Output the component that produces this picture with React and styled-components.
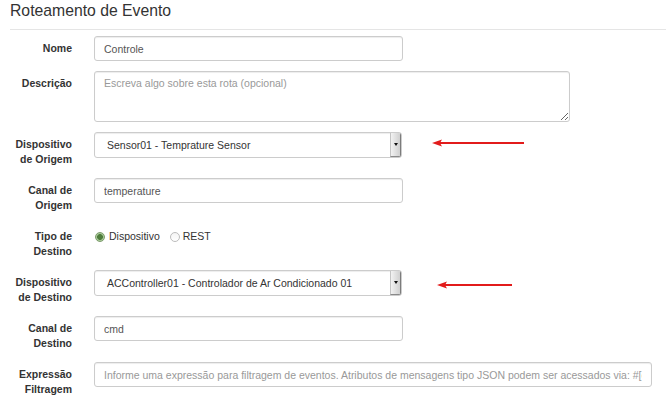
import React from 'react';
import styled, { createGlobalStyle } from 'styled-components';

const GlobalStyle = createGlobalStyle`
  html, body {
    margin: 0;
    padding: 0;
    background: #fff;
  }
  body {
    font-family: "Liberation Sans", Arial, Helvetica, sans-serif;
    font-size: 10.5px;
    line-height: 15px;
    color: #333;
  }
`;

const Page = styled.div`
  padding-left: 10px;
`;

const Legend = styled.h2`
  margin: 0 0 6px;
  padding: 1px 0 8px;
  font-size: 15.75px;
  font-weight: normal;
  line-height: 20px;
  color: #333;
  border-bottom: 1px solid #e5e5e5;
`;

const Form = styled.form`
  display: flex;
  flex-direction: column;
  gap: 10px;
  margin: 0;
`;

const Row = styled.div`
  display: grid;
  grid-template-columns: 62px 1fr;
  column-gap: 22px;
  align-items: start;
`;

const Label = styled.label`
  text-align: right;
  font-weight: bold;
  padding: 5px 0 1px;
  color: #333;
`;

const Control = styled.div`
  display: flex;
  align-items: flex-start;
`;

const TextInput = styled.input`
  box-sizing: border-box;
  width: ${p => p.$w}px;
  height: 25px;
  margin: 0;
  padding: 4px 9px;
  font: inherit;
  color: #555;
  background: #fff;
  border: 1px solid #ccc;
  border-radius: 3px;
  box-shadow: inset 0 1px 1px rgba(0, 0, 0, 0.075);
  outline: none;

  &::placeholder {
    color: #999;
  }
`;

const TextArea = styled.textarea`
  box-sizing: border-box;
  width: 476px;
  height: 51px;
  margin: 0;
  padding: 4px 9px;
  font: inherit;
  color: #555;
  border: 1px solid #ccc;
  border-radius: 3px;
  box-shadow: inset 0 1px 1px rgba(0, 0, 0, 0.075);
  outline: none;

  &::placeholder {
    color: #999;
  }
`;

const Select = styled.div`
  box-sizing: border-box;
  display: flex;
  width: 308px;
  height: 26px;
  border: 1px solid #ccc;
  border-radius: 3px;
  overflow: hidden;
  background: #fff;
  box-shadow: inset 0 1px 1px rgba(0, 0, 0, 0.075);
`;

const SelectText = styled.span`
  flex: 1;
  padding-left: 12px;
  line-height: 24px;
  color: #333;
  white-space: nowrap;
`;

const SelectButton = styled.span`
  width: 9px;
  display: flex;
  align-items: center;
  justify-content: center;
  background: linear-gradient(to right, #f2f2f2, #d0d0d0);
  border-left: 1px solid #c4c4c4;
  border-right: 1px solid #7c7c7c;
  border-bottom: 1px solid #8a8a8a;

  &::after {
    content: '';
    border-left: 2px solid transparent;
    border-right: 2px solid transparent;
    border-top: 3px solid #111;
  }
`;

const Arrow = styled.svg`
  flex: none;
  margin-left: ${p => p.$left}px;
  margin-top: ${p => p.$top}px;
`;

const RadioGroup = styled.div`
  display: flex;
  align-items: center;
  padding-top: 5px;
  height: 15px;
`;

const RadioDot = styled.span`
  box-sizing: border-box;
  width: 10px;
  height: 10px;
  border-radius: 50%;
  margin: 0 ${p => (p.$checked ? 4 : 3)}px 0 ${p => (p.$checked ? 1 : 10)}px;
  border: 1px solid ${p => (p.$checked ? '#7d9c6c' : '#bcbcbc')};
  background: ${p =>
    p.$checked
      ? 'radial-gradient(circle, #4f7d3c 0 2.6px, #a8c99a 3.2px)'
      : 'linear-gradient(#f4f4f4, #fff)'};
`;

const RadioText = styled.span`
  color: #333;
`;

const RedArrow = ({ length, left, top }) => (
  <Arrow width={length} height={10} viewBox={`0 0 ${length} 10`} $left={left} $top={top}>
    <line x1="7" y1="5" x2={length} y2="5" stroke="#e21b1b" strokeWidth="2" />
    <polygon points="0,5 10,1.6 8,5 10,8.4" fill="#e21b1b" />
  </Arrow>
);

export default function App() {
  return (
    <Page>
      <GlobalStyle />
      <Legend>Roteamento de Evento</Legend>
      <Form>
        <Row>
          <Label>Nome</Label>
          <Control>
            <TextInput $w={309} defaultValue="Controle" />
          </Control>
        </Row>
        <Row>
          <Label>Descrição</Label>
          <Control>
            <TextArea placeholder="Escreva algo sobre esta rota (opcional)" />
          </Control>
        </Row>
        <Row>
          <Label>Dispositivo<br />de Origem</Label>
          <Control>
            <Select>
              <SelectText>Sensor01 - Temprature Sensor</SelectText>
              <SelectButton />
            </Select>
            <RedArrow length={92} left={30} top={6} />
          </Control>
        </Row>
        <Row>
          <Label>Canal de<br />Origem</Label>
          <Control>
            <TextInput $w={309} defaultValue="temperature" />
          </Control>
        </Row>
        <Row>
          <Label>Tipo de<br />Destino</Label>
          <RadioGroup>
            <RadioDot $checked />
            <RadioText>Dispositivo</RadioText>
            <RadioDot />
            <RadioText>REST</RadioText>
          </RadioGroup>
        </Row>
        <Row>
          <Label>Dispositivo<br />de Destino</Label>
          <Control>
            <Select>
              <SelectText>ACController01 - Controlador de Ar Condicionado 01</SelectText>
              <SelectButton />
            </Select>
            <RedArrow length={75} left={35} top={10} />
          </Control>
        </Row>
        <Row>
          <Label>Canal de<br />Destino</Label>
          <Control>
            <TextInput $w={309} defaultValue="cmd" />
          </Control>
        </Row>
        <Row>
          <Label>Expressão<br />Filtragem</Label>
          <Control>
            <TextInput
              $w={558}
              placeholder="Informe uma expressão para filtragem de eventos. Atributos de mensagens tipo JSON podem ser acessados via: #[campo]"
            />
          </Control>
        </Row>
      </Form>
    </Page>
  );
}
